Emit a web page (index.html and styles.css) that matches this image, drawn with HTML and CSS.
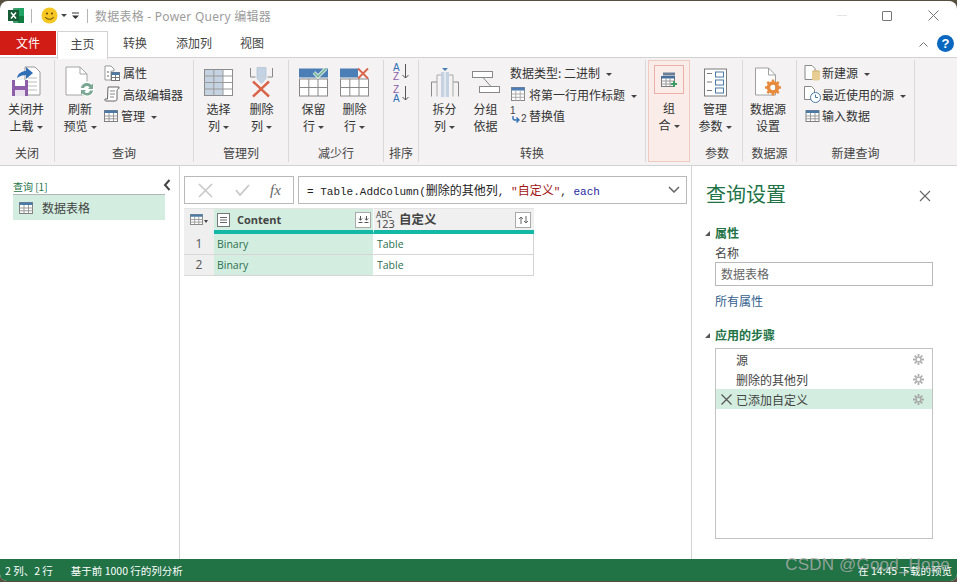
FILE: index.html
```html
<!DOCTYPE html>
<html lang="zh-CN">
<head>
<meta charset="utf-8">
<title>数据表格 - Power Query 编辑器</title>
<link rel="stylesheet" href="styles.css">
</head>
<body>
<div class="window">
  <header class="titlebar">
    <svg class="ic-excel" width="17" height="17" viewBox="0 0 17 17"><rect x="5" y="1" width="11" height="15" rx="1" fill="#3d9e6c"/><rect x="10" y="1" width="6" height="8" fill="#21a366"/><rect x="10" y="9" width="6" height="7" fill="#107c41"/><rect x="0" y="3" width="11" height="11" fill="#185c37"/><path d="M3 5.5l5 6M8 5.5l-5 6" stroke="#fff" stroke-width="1.5"/></svg>
    <span class="tsep"></span>
    <svg class="ic-smile" width="17" height="17" viewBox="0 0 17 17"><circle cx="8.5" cy="8.5" r="8" fill="#f6c723"/><circle cx="6" cy="6.5" r="1" fill="#5a4300"/><circle cx="11" cy="6.5" r="1" fill="#5a4300"/><path d="M4.5 10c1 3 7 3 8 0" stroke="#5a4300" stroke-width="1" fill="none"/></svg>
    <span class="caret qat-caret"></span>
    <svg class="ic-qat" width="9" height="8" viewBox="0 0 9 8"><path d="M1 1h7" stroke="#333"/><path d="M1 3.5h7L4.5 7z" fill="#333"/></svg>
    <span class="tsep second"></span>
    <span class="wintitle">数据表格 - Power Query 编辑器</span>
    <div class="winctl">
      <span class="min"></span>
      <span class="max"></span>
      <svg width="11" height="11" viewBox="0 0 11 11"><path d="M.5.5l10 10M10.5.5l-10 10" stroke="#777" fill="none"/></svg>
    </div>
  </header>

  <nav class="tabs">
    <span class="tab file">文件</span>
    <span class="tab active">主页</span>
    <span class="tab t1">转换</span>
    <span class="tab t2">添加列</span>
    <span class="tab t3">视图</span>
    <span class="tab-right">
      <svg width="9" height="6" viewBox="0 0 9 6"><path d="M.5 5.5l4-4 4 4" stroke="#777" fill="none"/></svg>
      <span class="help">?</span>
    </span>
  </nav>

  <section class="ribbon">
    <div class="group g1">
      <div class="gbody">
        <div class="big w54">
          <svg class="bi" width="30" height="32" viewBox="0 0 30 32"><path d="M14 1h10l5 5v23H14z" fill="#fff" stroke="#9a9a9a"/><path d="M17 12h9M17 16h9M17 20h9M17 24h9" stroke="#bbb"/><path d="M6 12c1-5 5-7 9-7V1l7 6-7 6V9c-4 0-6 1-9 3z" fill="#2f6fb5"/><rect x="1" y="14" width="16" height="16" fill="#8e5fa8"/><rect x="4" y="14" width="10" height="6" fill="#fff"/><rect x="4" y="24" width="10" height="6" fill="#e9e0ee"/></svg>
          <span class="bl">关闭并<br>上载<i class="caret"></i></span>
        </div>
      </div>
      <div class="glabel">关闭</div>
    </div>

    <div class="group g2">
      <div class="gbody">
        <div class="big w50">
          <svg class="bi" width="30" height="32" viewBox="0 0 30 32"><path d="M1 1h14l7 7v21H1z" fill="#fff" stroke="#a5a5a5"/><path d="M15 1v7h7" fill="none" stroke="#a5a5a5"/><circle cx="22" cy="23" r="7.5" fill="#fff"/><path d="M16 22c.5-3.5 3-5 6-5 2 0 3.500.8 4.500 2l1.500-1.500V23h-5l1.500-1.500c-.6-1-1.500-1.500-2.500-1.500-1.500 0-2.500.8-3 2zM28 24.500c-.5 3.500-3 5-6 5-2 0-3.500-.8-4.500-2L16 29v-5h5l-1.500 1.500c.6 1 1.500 1.500 2.500 1.500 1.500 0 2.500-.8 3-2.500z" fill="#7aa894"/></svg>
          <span class="bl">刷新<br>预览<i class="caret"></i></span>
        </div>
        <div class="smalls s1">
          <div class="sm"><svg width="16" height="16" viewBox="0 0 16 16"><path d="M1 1h6l3 3v2H7v9H1z" fill="#fff" stroke="#999"/><circle cx="4" cy="7" r="1" fill="#999"/><circle cx="4" cy="11" r="1" fill="#999"/><rect x="7.500" y="7.500" width="8" height="8" fill="#fff" stroke="#777"/><rect x="7.500" y="7.500" width="8" height="2.500" fill="#4a7ba8"/><path d="M7.500 12.500h8M11.500 10v5" stroke="#777"/></svg><span>属性</span></div>
          <div class="sm"><svg width="16" height="16" viewBox="0 0 16 16"><path d="M4 1h11v1.500c-1 0-2 1-2 2V13c0 1.500-1 2-2 2H2c-1 0-1.500-1-1-2h2.500z" fill="#fff" stroke="#666"/><path d="M6 5h5M6 8h5M6 11h4" stroke="#888"/></svg><span>高级编辑器</span></div>
          <div class="sm"><svg class="grid-ic" width="14" height="12" viewBox="0 0 14 12"><rect x=".5" y=".5" width="13" height="11" fill="#fff" stroke="#808080"/><rect x=".5" y=".5" width="13" height="2.500" fill="#4a7ba8"/><path d="M.5 6h13M.5 8.800h13M5 3v8M9.500 3v8" stroke="#999"/></svg><span>管理<i class="caret gap"></i></span></div>
        </div>
      </div>
      <div class="glabel">查询</div>
    </div>

    <div class="group g3">
      <div class="gbody pad-a">
        <div class="big w43">
          <svg class="bi" width="29" height="27" viewBox="0 0 29 27"><rect x=".5" y=".5" width="28" height="26" fill="#fff" stroke="#8c8c8c"/><rect x="1" y="1" width="18" height="25" fill="#c4d2e2"/><path d="M.5 7h28M.5 13.500h28M.5 20h28M9.800 .5v26M19 .5v26" stroke="#9a9a9a"/></svg>
          <span class="bl">选择<br>列<i class="caret"></i></span>
        </div>
        <div class="big w43">
          <svg class="bi" width="23" height="30" viewBox="0 0 23 30"><path d="M.5 .5v9h5M22.500 .5v9h-5" fill="none" stroke="#888"/><path d="M7 0h9v11l-4.500 5L7 11z" fill="#c4d2e2" stroke="#a8bbd0" stroke-width=".6"/><path d="M3 14l16 15M19 14L3 29" stroke="#d9644a" stroke-width="2.400"/></svg>
          <span class="bl">删除<br>列<i class="caret"></i></span>
        </div>
      </div>
      <div class="glabel">管理列</div>
    </div>

    <div class="group g4">
      <div class="gbody pad-b">
        <div class="big w41">
          <svg class="bi" width="29" height="28" viewBox="0 0 29 28"><rect x=".5" y="10.500" width="28" height="17" fill="#fff" stroke="#888"/><path d="M.5 19h28M9.800 10.500v17M19 10.500v17" stroke="#888"/><rect x="0" y="0" width="29" height="9" fill="#4a7eb5"/><path d="M15 4l4 4 8-8" stroke="#fff" stroke-width="3.500" fill="none"/><path d="M15 4l4 4 8-8" stroke="#7bb79d" stroke-width="2" fill="none"/></svg>
          <span class="bl">保留<br>行<i class="caret"></i></span>
        </div>
        <div class="big w41">
          <svg class="bi" width="29" height="28" viewBox="0 0 29 28"><rect x=".5" y="10.500" width="28" height="17" fill="#fff" stroke="#888"/><path d="M.5 19h28M9.800 10.500v17M19 10.500v17" stroke="#888"/><rect x="0" y="0" width="18" height="9" fill="#4a7eb5"/><path d="M18 0l10 10M28 0L18 10" stroke="#d9644a" stroke-width="1.800"/></svg>
          <span class="bl">删除<br>行<i class="caret"></i></span>
        </div>
      </div>
      <div class="glabel">减少行</div>
    </div>

    <div class="group g5">
      <div class="gbody sortcol">
        <div class="sortico"><span class="az"><b class="a1">A</b><b class="z1">Z</b></span><svg width="7" height="15" viewBox="0 0 7 15"><path d="M3.500 0v14M.5 11l3 3 3-3" stroke="#555" fill="none"/></svg></div>
        <div class="sortico"><span class="az"><b class="z1">Z</b><b class="a1">A</b></span><svg width="7" height="15" viewBox="0 0 7 15"><path d="M3.500 0v14M.5 11l3 3 3-3" stroke="#555" fill="none"/></svg></div>
      </div>
      <div class="glabel">排序</div>
    </div>

    <div class="group g6">
      <div class="gbody pad-c">
        <div class="big w41">
          <svg class="bi" width="28" height="29" viewBox="0 0 28 29"><path d="M.5 28.500V14H6M27.500 28.500V14H22" fill="none" stroke="#8a8a8a"/><path d="M6 28.500V7h4M22 28.500V7h-4" fill="none" stroke="#aaa"/><rect x="10" y="4" width="8" height="25" fill="#c4d2e2"/><path d="M14 4v25" stroke="#fff"/><path d="M11 0h6l-3 3z" fill="#4a7eb5"/></svg>
          <span class="bl">拆分<br>列<i class="caret"></i></span>
        </div>
        <div class="big w41">
          <svg class="bi groupby" width="28" height="22" viewBox="0 0 28 22"><rect x=".5" y=".5" width="20" height="6" fill="#fff" stroke="#888"/><rect x="7.500" y="15.500" width="20" height="6" fill="#fff" stroke="#888"/><path d="M11 6.500l8 9" stroke="#888"/></svg>
          <span class="bl">分组<br>依据</span>
        </div>
        <div class="smalls s2">
          <div class="sm"><span>数据类型: 二进制<i class="caret gap"></i></span></div>
          <div class="sm"><svg width="14" height="14" viewBox="0 0 14 14"><rect x=".5" y=".5" width="13" height="13" fill="#fff" stroke="#888"/><rect x=".5" y=".5" width="13" height="3" fill="#4a7eb5"/><path d="M.5 7h13M.5 10.300h13M4.800 3v11M9.200 3v11" stroke="#aaa"/></svg><span>将第一行用作标题<i class="caret gap"></i></span></div>
          <div class="sm"><span class="rep"><em class="r1">1</em><svg width="8" height="7" viewBox="0 0 8 7"><path d="M1 0v2c0 1.500 1 2 2 2h3M4.500 1.500L7 4 4.500 6.500" stroke="#2f6fb5" stroke-width="1.400" fill="none"/></svg><em class="r2">2</em></span><span>替换值</span></div>
        </div>
      </div>
      <div class="glabel">转换</div>
    </div>

    <div class="group g7">
      <div class="combine">
        <span class="comb-box">
          <svg width="17" height="16" viewBox="0 0 17 16"><rect x="2" y=".5" width="12" height="3" fill="#6a7f95"/><rect x=".5" y="4.500" width="13" height="10" fill="#fff" stroke="#777"/><rect x="0" y="4" width="14" height="2.500" fill="#47719c"/><path d="M.5 9h13M.5 12h13M5 6.500v8M9 6.500v8" stroke="#999"/><path d="M13 9v6M10 12h6" stroke="#3d9b66" stroke-width="2"/></svg>
        </span>
        <span class="bl">组<br>合<i class="caret"></i></span>
      </div>
    </div>

    <div class="group g8">
      <div class="gbody">
        <div class="big w46">
          <svg class="bi" width="23" height="28" viewBox="0 0 23 28"><rect x=".5" y=".5" width="22" height="27" fill="#fff" stroke="#7a7a7a"/><path d="M3 5h5M3 13.500h5M3 22h5" stroke="#7a7a7a"/><rect x="11.500" y="3.500" width="8" height="5" fill="#fff" stroke="#4a7ba8"/><rect x="11.500" y="11.500" width="8" height="5" fill="#fff" stroke="#4a7ba8"/><rect x="11.500" y="19.500" width="8" height="5" fill="#fff" stroke="#4a7ba8"/></svg>
          <span class="bl">管理<br>参数<i class="caret"></i></span>
        </div>
      </div>
      <div class="glabel">参数</div>
    </div>

    <div class="group g9">
      <div class="gbody">
        <div class="big w50">
          <svg class="bi" width="27" height="29" viewBox="0 0 27 29"><path d="M.5 .5h13l7 7v20H.5z" fill="#fff" stroke="#a0a0a0"/><path d="M13.500 .5v7h7" fill="none" stroke="#a0a0a0"/><circle cx="18" cy="20" r="4.500" fill="none" stroke="#e88a3c" stroke-width="3.500"/><path d="M18 12v3M18 25v3M10 20h3M23 20h3M12.300 14.300l2 2M21.700 23.700l2 2M12.300 25.700l2-2M21.700 16.300l2-2" stroke="#e88a3c" stroke-width="2.500"/></svg>
          <span class="bl">数据源<br>设置</span>
        </div>
      </div>
      <div class="glabel">数据源</div>
    </div>

    <div class="group g10">
      <div class="gbody">
        <div class="smalls s3">
          <div class="sm"><svg width="16" height="16" viewBox="0 0 16 16"><path d="M.5 .5h7l3 3v11H.5z" fill="#fff" stroke="#888"/><ellipse cx="11.500" cy="6.500" rx="4" ry="1.500" fill="#d9bf86"/><path d="M7.500 7v7c0 2 8 2 8 0V7z" fill="#e8cd92"/></svg><span>新建源<i class="caret gap"></i></span></div>
          <div class="sm"><svg width="17" height="17" viewBox="0 0 17 17"><path d="M.5 .5h7l3 3v10H.5z" fill="#fff" stroke="#888"/><circle cx="11.500" cy="11.500" r="5" fill="#fff" stroke="#4a7ba8"/><path d="M11.500 8.500v3h2.500" stroke="#4a7ba8" fill="none"/></svg><span>最近使用的源<i class="caret gap"></i></span></div>
          <div class="sm"><svg width="14" height="12" viewBox="0 0 14 12"><rect x=".5" y=".5" width="13" height="11" fill="#fff" stroke="#808080"/><rect x=".5" y=".5" width="13" height="2.500" fill="#4a7ba8"/><path d="M.5 6h13M.5 8.800h13M5 3v8M9.500 3v8" stroke="#999"/></svg><span>输入数据</span></div>
        </div>
      </div>
      <div class="glabel">新建查询</div>
    </div>
  </section>

  <main class="content">
    <aside class="queries">
      <div class="qhead"><span>查询 [1]</span></div>
      <svg class="collapse" width="8" height="12" viewBox="0 0 8 12"><path d="M6.500 1L2 6l4.500 5" stroke="#444" stroke-width="2" fill="none"/></svg>
      <div class="qitem">
        <svg width="14" height="12" viewBox="0 0 14 12"><rect x=".5" y=".5" width="13" height="11" fill="#fff" stroke="#808080"/><rect x=".5" y=".5" width="13" height="2.500" fill="#4a7ba8"/><path d="M.5 6h13M.5 8.800h13M5 3v8M9.500 3v8" stroke="#999"/></svg>
        <span>数据表格</span>
      </div>
    </aside>

    <section class="center">
      <div class="formula-row">
        <div class="fx-btns">
          <svg width="15" height="15" viewBox="0 0 15 15"><path d="M1 1l13 13M14 1L1 14" stroke="#c8c8c8" stroke-width="1.600"/></svg>
          <svg width="15" height="12" viewBox="0 0 15 12"><path d="M1 6l4 5 9-10" stroke="#c8c8c8" stroke-width="1.800" fill="none"/></svg>
          <span class="fx">fx</span>
        </div>
        <div class="formula">
          <code>= Table.AddColumn(<span class="cjk">删除的其他列</span>, <span class="str">"<span class="cjk">自定义</span>"</span>, <span class="kw">each</span></code>
          <svg width="12" height="7" viewBox="0 0 12 7"><path d="M1 1l5 5 5-5" stroke="#666" stroke-width="1.500" fill="none"/></svg>
        </div>
      </div>

      <div class="grid">
        <div class="h corner">
          <svg width="13" height="11" viewBox="0 0 14 12"><rect x=".5" y=".5" width="13" height="11" fill="#fff" stroke="#808080"/><rect x=".5" y=".5" width="13" height="2.500" fill="#4a7ba8"/><path d="M.5 6h13M.5 8.800h13M5 3v8M9.500 3v8" stroke="#999"/></svg>
          <i class="caret"></i>
        </div>
        <div class="h hsel">
          <svg class="doc" width="13" height="14" viewBox="0 0 13 14"><rect x=".5" y=".5" width="12" height="13" fill="#fff" stroke="#777"/><path d="M3 4.500h7M3 7h7M3 9.500h7" stroke="#666"/></svg>
          <b>Content</b>
          <span class="hbtn"><svg width="11" height="7" viewBox="0 0 11 7"><path d="M.5 6.500h4M6.500 6.500h4M2.500 0v4M.8 2.500l1.700 1.700 1.700-1.700M8.500 0v4M6.800 2.500l1.700 1.700 1.700-1.700" stroke="#555" fill="none"/></svg></span>
        </div>
        <div class="h hplain">
          <span class="abc"><span class="abc-a">ABC</span><span class="abc-n">123</span></span>
          <b class="zh">自定义</b>
          <span class="hbtn"><svg width="11" height="8" viewBox="0 0 11 8"><path d="M3 8V1M1 3l2-2 2 2M8 0v7M6 5l2 2 2-2" stroke="#666" fill="none"/></svg></span>
        </div>
        <div class="rn">1</div><div class="c sel">Binary</div><div class="c">Table</div>
        <div class="rn">2</div><div class="c sel">Binary</div><div class="c">Table</div>
      </div>
    </section>

    <aside class="settings">
      <div class="s-title">
        <span>查询设置</span>
        <svg width="12" height="12" viewBox="0 0 12 12"><path d="M1 1l10 10M11 1L1 11" stroke="#666" stroke-width="1.100"/></svg>
      </div>
      <div class="s-head first"><i class="tri"></i>属性</div>
      <div class="s-label">名称</div>
      <div class="s-input">数据表格</div>
      <div class="s-link">所有属性</div>
      <div class="s-head second"><i class="tri"></i>应用的步骤</div>
      <div class="steps">
        <div class="step"><span class="sx"></span><span class="sn">源</span><span class="gear"><svg width="11" height="11" viewBox="0 0 12 12"><path d="M6 0v12M0 6h12M1.800 1.800l8.400 8.400M10.200 1.800l-8.400 8.400" stroke="#b0b0b0" stroke-width="2"/><circle cx="6" cy="6" r="1.800" fill="#fff"/></svg></span></div>
        <div class="step"><span class="sx"></span><span class="sn">删除的其他列</span><span class="gear"><svg width="11" height="11" viewBox="0 0 12 12"><path d="M6 0v12M0 6h12M1.800 1.800l8.400 8.400M10.200 1.800l-8.400 8.400" stroke="#b0b0b0" stroke-width="2"/><circle cx="6" cy="6" r="1.800" fill="#fff"/></svg></span></div>
        <div class="step on"><span class="sx"><svg width="11" height="11" viewBox="0 0 11 11"><path d="M.5.5l10 10M10.500.5l-10 10" stroke="#555" stroke-width="1.200"/></svg></span><span class="sn">已添加自定义</span><span class="gear"><svg width="11" height="11" viewBox="0 0 12 12"><path d="M6 0v12M0 6h12M1.800 1.800l8.400 8.400M10.200 1.800l-8.400 8.400" stroke="#a8a8a8" stroke-width="2"/><circle cx="6" cy="6" r="1.800" fill="#d3eee0"/></svg></span></div>
      </div>
    </aside>
  </main>

  <footer class="status">
    <span>2 列、2 行</span>
    <span>基于前 1000 行的列分析</span>
    <span class="preview">在 14:45 下载的预览</span>
  </footer>
</div>
<div class="watermark">CSDN @Good_Hope</div>
</body>
</html>
```

FILE: styles.css
```css
* { box-sizing: border-box; }
html, body { margin: 0; height: 100%; }
body {
  width: 957px;
  height: 582px;
  overflow: hidden;
  background: #55503f;
  font-family: "Noto Sans CJK SC", "Noto Sans", sans-serif;
  font-size: 12px;
  color: #333;
  position: relative;
}
.window {
  margin-top: 1px;
  height: 580px;
  background: #fff;
  border-radius: 8px 8px 7px 7px;
  overflow: hidden;
  display: flex;
  flex-direction: column;
}
i { font-style: normal; }

/* title bar */
.titlebar {
  height: 29px;
  flex: none;
  display: flex;
  align-items: center;
  padding-left: 8px;
}
.tsep { width: 1px; height: 14px; background: #b5b5b5; margin: 0 9px 0 6px; }
.tsep.second { margin: 0 7px 0 7px; }
.qat-caret { margin: 0 4px 0 3px; }
.wintitle {
  color: #9c9c9c;
  font-family: "Noto Sans", "Noto Sans CJK SC", sans-serif;
  font-size: 12px;
  letter-spacing: .25px;
}
.winctl { margin-left: auto; display: flex; align-items: center; padding-right: 18px; }
.winctl .min { width: 10px; height: 1px; background: #e4e4e4; margin-right: 35px; }
.winctl .max { width: 10px; height: 10px; border: 1px solid #777; border-radius: 1px; margin-right: 36px; }

/* caret */
.caret {
  display: inline-block;
  width: 0;
  height: 0;
  border-left: 3px solid transparent;
  border-right: 3px solid transparent;
  border-top: 3px solid #444;
  margin-left: 3px;
  vertical-align: middle;
}
.caret.gap { margin-left: 6px; }

/* tabs */
.tabs {
  height: 28px;
  flex: none;
  display: flex;
  align-items: flex-start;
  border-bottom: 1px solid #d2d2d2;
  position: relative;
}
.tab { height: 24px; line-height: 24px; text-align: center; color: #444; margin-top: 1px; }
.tab.file { width: 56px; background: #d01c15; color: #fff; }
.tab.active {
  width: 51px;
  height: 28px;
  margin-top: 1px;
  background: #fff;
  border: 1px solid #d2d2d2;
  border-bottom: 0;
  margin-left: 1px;
  line-height: 24px;
  z-index: 1;
}
.tab.t1 { width: 54px; }
.tab.t2 { width: 54px; margin-left: 5px; }
.tab.t3 { width: 62px; }
.tab-right { margin-left: auto; display: flex; align-items: center; gap: 9px; padding: 5px 3px 0 0; }
.help {
  width: 17px; height: 17px; border-radius: 50%; background: #0a67bf; color: #fff;
  font: bold 13px/17px "Liberation Sans", sans-serif; text-align: center;
}

/* ribbon */
.ribbon {
  height: 108px;
  flex: none;
  display: flex;
  background: #f4f2f3;
  border-bottom: 1px solid #d2d2d2;
  padding: 2px 0 3px;
}
.group { display: flex; flex-direction: column; border-right: 1px solid #d9d9d9; flex: none; }
.gbody { flex: 1; display: flex; }
.glabel { height: 20px; line-height: 22px; text-align: center; color: #444; flex: none; }
.g1 { width: 55px; }
.g2 { width: 139px; }
.g3 { width: 95px; }
.g4 { width: 95px; }
.g5 { width: 35px; }
.g6 { width: 227px; }
.g7 { width: 46px; border-right: 0; padding: 0 2px; }
.g8 { width: 51px; }
.g9 { width: 54px; }
.g10 { width: 118px; }
.pad-a { padding-left: 3px; }
.pad-b { padding-left: 4px; }
.pad-c { padding-left: 5px; }

.big { display: flex; flex-direction: column; align-items: center; flex: none; padding-top: 6px; }
.w54 { width: 52px; }
.w50 { width: 50px; }
.w46 { width: 46px; }
.w43 { width: 43px; }
.w41 { width: 41px; }
.bi { display: block; height: 33px; flex: none; }
.bl { text-align: center; line-height: 17px; margin-top: 0; padding-top: 1px; color: #333; white-space: nowrap; }
.g1 .bi, .g2 .bi, .g9 .bi { height: 32px; margin-bottom: 1px; }
.groupby { margin-top: 5px; height: 22px !important; margin-bottom: 6px; }

.smalls { display: flex; flex-direction: column; padding-top: 2px; }
.sm { height: 21.5px; display: flex; align-items: center; gap: 3px; white-space: nowrap; }
.sm svg { flex: none; }
.s1 { margin-left: -1px; }
.s2 { margin-left: 4px; }
.s2 .sm svg { margin-left: 1px; margin-right: 1px; }
.s3 { margin-left: 7px; }
.s3 .sm { gap: 1px; }
.s3 .sm svg { width: 17px; }

/* sort */
.sortcol { flex-direction: column; padding: 4px 0 0 9px; gap: 4px; }
.sortico { display: flex; align-items: flex-start; height: 18px; gap: 1px; }
.az { display: flex; flex-direction: column; width: 8px; font: 10px/8.500px "Liberation Sans", sans-serif; }
.az b { font-weight: normal; }
.a1 { color: #2f6fb5; }
.z1 { color: #8e5fa8; }

/* combine */
.combine {
  height: 103px;
  background: #f9ece9;
  border: 1px solid #f0c9c1;
  display: flex;
  flex-direction: column;
  align-items: center;
  padding-top: 4px;
}
.comb-box {
  width: 30px; height: 29px;
  border: 1px solid #eeb0a6;
  display: flex; align-items: center; justify-content: center;
  margin-bottom: 4px;
}

/* replace icon */
.rep { position: relative; width: 16px; height: 16px; display: inline-block; margin-right: 0; font: 10px/10px "Liberation Sans", sans-serif; }
.rep em { font-style: normal; position: absolute; color: #444; }
.rep .r1 { left: 0; top: -2px; }
.rep .r2 { left: 11px; top: 6px; }
.rep svg { position: absolute; left: 1px; top: 8px; }

/* content */
.content { flex: 1; display: flex; min-height: 0; }
.queries { width: 180px; flex: none; border-right: 1px solid #d4d4d4; padding: 14px 14px 0 13px; position: relative; }
.qhead { height: 15px; border-bottom: 1px solid #b5b5b5; color: #217346; font-size: 10px; line-height: 14px; }
.collapse { position: absolute; left: 163px; top: 13px; }
.qitem { height: 25px; background: #d3eee0; display: flex; align-items: center; gap: 9px; padding-left: 6px; color: #444; }
.center { flex: 1; padding: 10px 0 0 4px; min-width: 0; }
.formula-row { display: flex; gap: 4px; height: 28px; padding-right: 4px; }
.fx-btns {
  width: 110px; border: 1px solid #b9b9b9; display: flex; align-items: center; padding-left: 13px; gap: 22px;
}
.fx { font: italic 15px "Liberation Serif", serif; color: #666; margin-left: -2px; }
.formula {
  flex: 1; border: 1px solid #b9b9b9; display: flex; align-items: center; justify-content: space-between;
  padding: 0 6px 2px 8px;
}
code { font: 11px "Liberation Mono", monospace; color: #222; }
.cjk { font: 12px "Noto Sans CJK SC", sans-serif; }
.str { color: #a31515; }
.kw { color: #1f1fa0; }

.grid {
  margin-top: 4px;
  width: 350px;
  display: grid;
  grid-template-columns: 30px 160px 160px;
  grid-template-rows: 26px 21px 21px;
}
.h { display: flex; align-items: center; border-bottom: 4px solid #14b8a6; border-top: 1px solid #e4e4e4; }
.corner { background: #efefef; border-bottom-color: #efefef; padding: 0 0 0 6px; }
.corner .caret { margin-left: 1px; border-left-width: 2.500px; border-right-width: 2.500px; position: relative; top: 2px; }
.hsel { background: #d3eee0; padding: 0 2px 0 3px; border-right: 1px solid #fff; }
.hplain { background: #f0f0f0; padding: 0 3px 0 2px; }
.doc { margin-right: 7px; flex: none; }
.h b { font: bold 11px "Open Sans", sans-serif; color: #444; }
.h b.zh { font: bold 12.500px/16px "Noto Sans CJK SC", sans-serif; color: #444; margin: -2px 0 0 4px; }
.hbtn {
  margin-left: auto; width: 16px; height: 16px; border: 1px solid #aaa; background: #fff;
  display: flex; align-items: center; justify-content: center;
}
.abc { display: flex; flex-direction: column; font-family: "Open Sans", sans-serif; color: #444; }
.abc-a { font-size: 8.500px; line-height: 8px; }
.abc-n { font-size: 11px; line-height: 9px; }
.rn { background: #efefef; text-align: center; color: #555; border-bottom: 1px solid #d9d9d9; font: 12px/20px "Open Sans", sans-serif; }
.c { font: 10.500px/20px "Open Sans", sans-serif; color: #2d7051; padding-left: 3px; border-bottom: 1px solid #d4d4d4; border-right: 1px solid #d4d4d4; }
.c.sel { background: #d3eee0; border-right-color: #fff; }

/* settings */
.settings { width: 266px; flex: none; border-left: 1px solid #d4d4d4; padding: 0 24px 0 23px; position: relative; }
.s-title { display: flex; align-items: center; justify-content: space-between; padding: 13px 0 0 0; margin-left: -9px; font-size: 20px; line-height: 30px; color: #217346; height: 43px; }
.s-title svg { margin-right: 2px; position: relative; top: 2px; }
.s-head { font-weight: bold; color: #217346; line-height: 18px; position: relative; }
.s-head.first { margin-top: 15px; }
.s-head.second { margin-top: 16px; }
.tri { position: absolute; left: -10px; top: 7px; width: 0; height: 0; border-left: 5px solid transparent; border-bottom: 5px solid #555; }
.s-label { line-height: 18px; margin-top: 2px; color: #444; }
.s-input { height: 24px; border: 1px solid #b9b9b9; padding-left: 5px; line-height: 22px; color: #666; }
.s-link { margin-top: 6px; line-height: 18px; color: #34608c; }
.steps { margin-top: 4px; height: 191px; border: 1px solid #c2c2c2; }
.step { height: 20px; display: flex; align-items: center; color: #444; }
.step.on { background: #d3eee0; }
.sx { width: 20px; flex: none; display: flex; justify-content: center; }
.sn { flex: 1; }
.gear { width: 28px; height: 11px; display: flex; justify-content: center; }

/* status */
.status {
  height: 22px;
  flex: none;
  background: #217346;
  color: #fff;
  display: flex;
  align-items: center;
  font-size: 10.500px;
  padding: 0 5px;
  gap: 18px;
}
.preview { margin-left: auto; }
.watermark {
  position: absolute;
  right: 7px;
  top: 555px;
  font: 17px "Liberation Sans", sans-serif;
  letter-spacing: .2px;
  color: rgba(175, 175, 175, .8);
}
```
